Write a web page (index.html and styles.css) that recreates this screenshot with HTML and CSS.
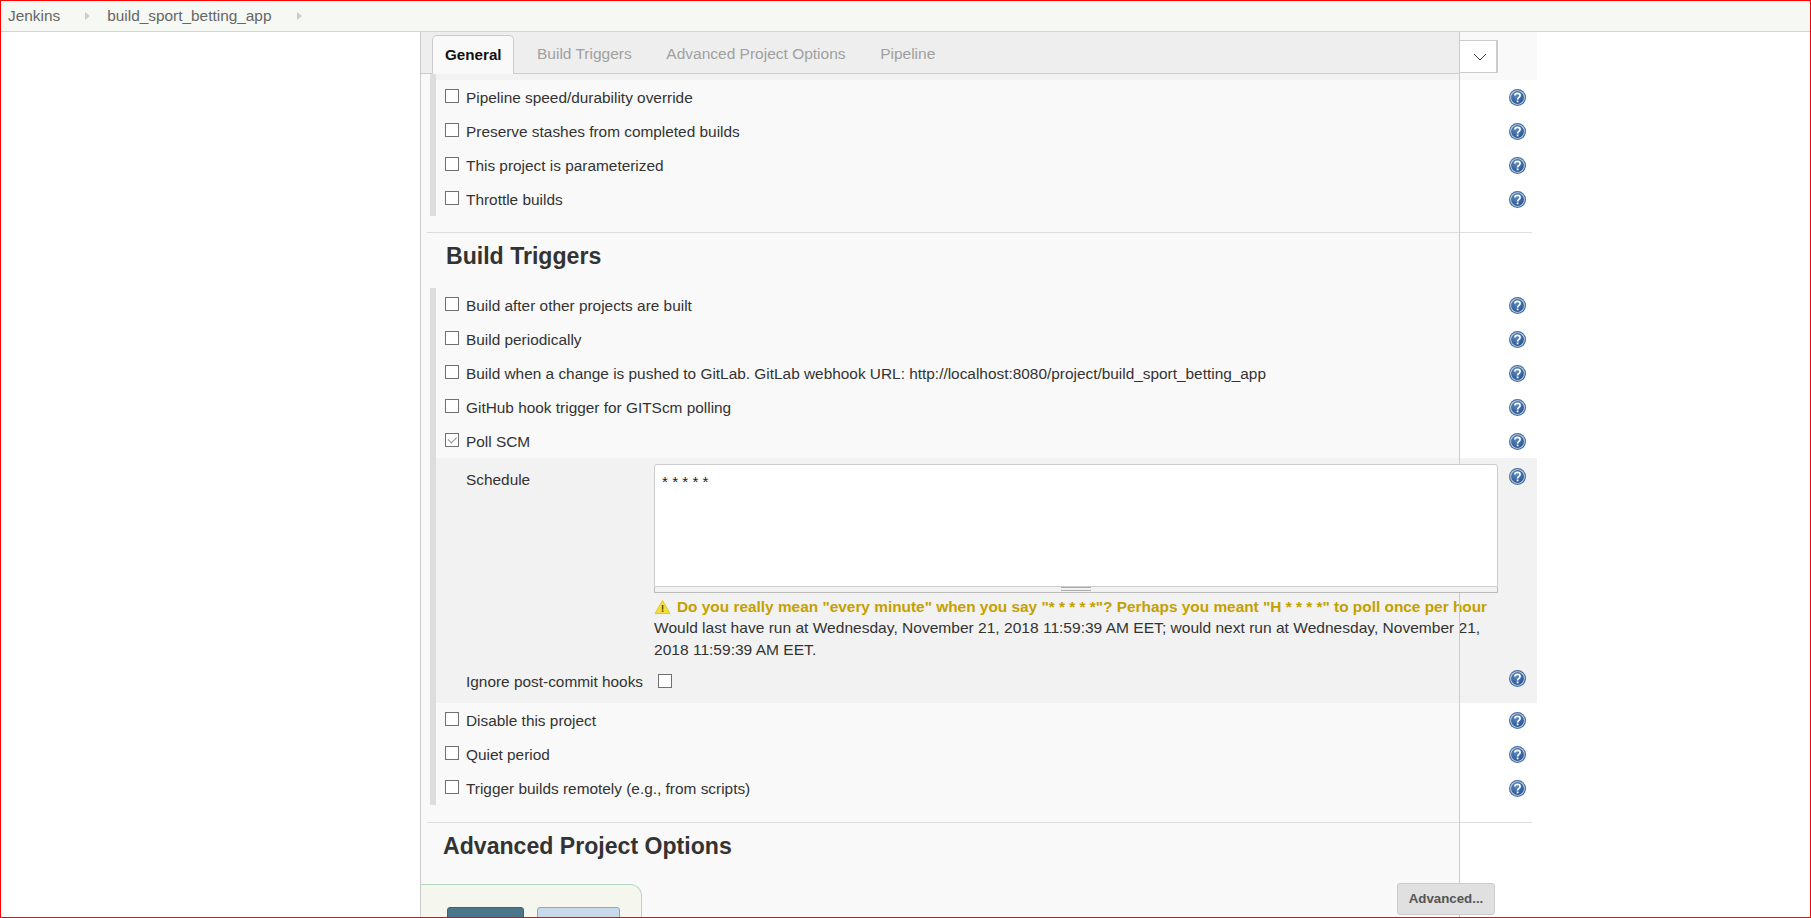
FILE: index.html
```html
<!doctype html>
<html>
    <head>
        <title>build_sport_betting_app Config [Jenkins]</title>
        <link rel="stylesheet" href="styles.css">
    </head>
    <body>
        <svg class="defs" width="0" height="0">
            <defs>
                <radialGradient id="help_fill" cx="40%" cy="30%" r="80%">
                    <stop offset="0" stop-color="#5f8bc2" />
                    <stop offset="1" stop-color="#224f8e" />
                </radialGradient>
                <symbol id="help" viewBox="0 0 17 17">
                    <circle cx="8.5" cy="8.5" r="8.5" fill="#46709f" />
                    <circle cx="8.5" cy="8.5" r="7.3" fill="#c8d6e8" />
                    <circle cx="8.5" cy="8.5" r="6.4" fill="url(#help_fill)" />
                    <path d="M5.9 6.6 C5.9 3.6 11.1 3.6 11.1 6.6 C11.1 8.5 8.6 8.2 8.6 10.4" fill="none" stroke="#fff" stroke-width="1.7" />
                    <rect x="7.7" y="11.5" width="1.8" height="1.8" fill="#fff" />
                </symbol>
            </defs>
        </svg>
        <div class="page">
            <div class="breadcrumbs">
                <span class="crumb">Jenkins</span>
                <span class="crumb_arrow"></span>
                <span class="crumb">build_sport_betting_app</span>
                <span class="crumb_arrow"></span>
            </div>
            <div class="config">
                <div class="divider"></div>
                <div class="tabbar">
                    <div class="tabs">
                        <div class="tab active">General</div>
                        <div class="tab">Build Triggers</div>
                        <div class="tab">Advanced Project Options</div>
                        <div class="tab">Pipeline</div>
                    </div>
                    <div class="tab_menu">
                        <svg width="14" height="8" viewBox="0 0 14 8"><path d="M1 1 L7 7 L13 1" fill="none" stroke="#444" stroke-width="1" /></svg>
                    </div>
                </div>

                <div class="section">
                    <div class="band"></div>
                    <div class="row"><input type="checkbox" /><label>Pipeline speed/durability override</label><svg class="help"><use href="#help" /></svg></div>
                    <div class="row"><input type="checkbox" /><label>Preserve stashes from completed builds</label><svg class="help"><use href="#help" /></svg></div>
                    <div class="row"><input type="checkbox" /><label>This project is parameterized</label><svg class="help"><use href="#help" /></svg></div>
                    <div class="row"><input type="checkbox" /><label>Throttle builds</label><svg class="help"><use href="#help" /></svg></div>
                </div>

                <div class="section_header triggers"><h2>Build Triggers</h2></div>

                <div class="section">
                    <div class="row"><input type="checkbox" /><label>Build after other projects are built</label><svg class="help"><use href="#help" /></svg></div>
                    <div class="row"><input type="checkbox" /><label>Build periodically</label><svg class="help"><use href="#help" /></svg></div>
                    <div class="row"><input type="checkbox" /><label>Build when a change is pushed to GitLab. GitLab webhook URL: http://localhost:8080/project/build_sport_betting_app</label><svg class="help"><use href="#help" /></svg></div>
                    <div class="row"><input type="checkbox" /><label>GitHub hook trigger for GITScm polling</label><svg class="help"><use href="#help" /></svg></div>
                    <div class="row"><input type="checkbox" checked /><label>Poll SCM</label><svg class="help"><use href="#help" /></svg></div>
                    <div class="nested">
                        <div class="field_label">Schedule</div>
                        <div class="field_value">
                            <div class="textarea">* * * * *</div>
                            <div class="grip"><span></span></div>
                            <div class="warning">
                                <svg width="17" height="16" viewBox="0 0 17 16"><path d="M8.5 1.5 L16 14.5 L1 14.5 Z" fill="#f3de3c" stroke="#e2c62a" stroke-linejoin="round" /><rect x="7.8" y="6" width="1.6" height="4.5" fill="#5a5010" /><rect x="7.8" y="11.3" width="1.6" height="1.6" fill="#5a5010" /></svg>
                                <span>Do you really mean "every minute" when you say "* * * * *"? Perhaps you meant "H * * * *" to poll once per hour</span>
                            </div>
                            <div class="next_run">Would last have run at Wednesday, November 21, 2018 11:59:39 AM EET; would next run at Wednesday, November 21, 2018 11:59:39 AM EET.</div>
                        </div>
                        <svg class="help"><use href="#help" /></svg>
                        <div class="field_label hooks">Ignore post-commit hooks</div>
                        <div class="field_value hooks"><input type="checkbox" /></div>
                        <svg class="help hooks"><use href="#help" /></svg>
                    </div>
                    <div class="row"><input type="checkbox" /><label>Disable this project</label><svg class="help"><use href="#help" /></svg></div>
                    <div class="row"><input type="checkbox" /><label>Quiet period</label><svg class="help"><use href="#help" /></svg></div>
                    <div class="row"><input type="checkbox" /><label>Trigger builds remotely (e.g., from scripts)</label><svg class="help"><use href="#help" /></svg></div>
                </div>

                <div class="section_header advanced"><h2>Advanced Project Options</h2></div>

                <div class="footer">
                    <div class="bottom_bar">
                        <button class="save"></button>
                        <button class="apply"></button>
                    </div>
                    <button class="advanced_btn">Advanced...</button>
                </div>
            </div>
        </div>
    </body>
</html>
```

FILE: styles.css
```css
html, body {
    margin: 0;
    height: 918px;
    overflow: hidden;
    background-color: #fff;
}

body {
    font-family: "Liberation Sans", Arial, sans-serif;
    font-size: 15.4px;
    color: #333;
}

.defs {
    display: block;
    height: 0;
}

.page {
    height: 918px;
    box-sizing: border-box;
    border: 1px solid #f00;
    overflow: hidden;
}

.breadcrumbs {
    height: 30px;
    background-color: #f6f8f3;
    border-bottom: 1px solid #d3d3d3;
    display: flex;
    align-items: center;
    padding-left: 7px;
    color: #666;
}

.crumb_arrow {
    width: 0;
    height: 0;
    border-left: 5px solid #ccc;
    border-top: 4px solid transparent;
    border-bottom: 4px solid transparent;
    margin: -1px 17px 0 25px;
}

.config {
    position: relative;
    margin-left: 419px;
    width: 1116px;
    height: 886px;
    border-left: 1px solid #ccc;
    background: linear-gradient(90deg, #f9f9f9 1038px, #fff 1038px);
}

.divider {
    position: absolute;
    left: 1038px;
    top: 0;
    bottom: 0;
    width: 1px;
    background-color: #ccc;
}

.tabbar {
    height: 42px;
    display: flex;
    background-color: #f9f9f9;
}

.tabs {
    width: 1038px;
    height: 42px;
    box-sizing: border-box;
    background-color: #eee;
    border-bottom: 1px solid #ccc;
    display: flex;
    align-items: flex-end;
    padding-left: 11px;
}

.tab {
    height: 38px;
    line-height: 38px;
    padding: 0 17.3px;
    font-size: 15.5px;
    color: #a0a0a0;
}

.tab.active {
    box-sizing: border-box;
    width: 82px;
    height: 39px;
    margin-bottom: -1px;
    padding: 0 0 0 12px;
    margin-right: 5.7px;
    font-size: 15.2px;
    font-weight: bold;
    color: #111;
    background-color: #f9f9f9;
    border: 1px solid #ccc;
    border-bottom: none;
    border-radius: 5px 5px 0 0;
}

.tab_menu {
    width: 38px;
    height: 33px;
    margin: 8px 0 0 1px;
    box-sizing: border-box;
    background-color: #fff;
    border: 1px solid #ccc;
    border-width: 1px 2px 1px 0;
    padding-left: 3px;
    display: flex;
    align-items: center;
    justify-content: center;
}

.section {
    margin-left: 9px;
    width: 1107px;
    box-sizing: border-box;
    border-left: 6px solid #ddd;
}

.band {
    height: 6px;
    background: linear-gradient(90deg, #f2f2f2 1023px, #f9f9f9 1023px);
}

.row {
    height: 34px;
    display: flex;
    align-items: center;
    padding: 0 11px 0 9px;
}

.row label {
    padding-top: 2px;
}

input[type="checkbox"] {
    appearance: none;
    box-sizing: border-box;
    width: 14px;
    height: 14px;
    margin: -2px 7px 0 0;
    flex-shrink: 0;
    border: 1px solid #707070;
    background-color: #fff;
    position: relative;
}

input[type="checkbox"]:checked::after {
    content: "";
    position: absolute;
    left: 4px;
    top: 1px;
    width: 4px;
    height: 7px;
    border: solid #888;
    border-width: 0 1px 1px 0;
    transform: rotate(45deg);
}

.help {
    width: 17px;
    height: 17px;
    margin-left: auto;
    flex-shrink: 0;
}

.section_header {
    margin-left: 6px;
    border-top: 1px solid #ddd;
}

.section_header h2 {
    margin: 0;
    font-size: 23.1px;
    font-weight: bold;
    line-height: 26px;
    padding-top: 10px;
}

.section_header.triggers {
    margin-top: 16px;
    height: 55px;
    padding-left: 19px;
    width: 1086px;
}

.section_header.advanced {
    margin-top: 17px;
    height: 61px;
    padding-left: 16px;
    width: 1089px;
}

.nested {
    height: 245px;
    box-sizing: border-box;
    background-color: #f2f2f2;
    padding: 6px 11px 0 30px;
    display: grid;
    grid-template-columns: 188px 844px 28px;
    grid-template-rows: 196px 1fr;
}

.nested .help {
    justify-self: end;
    margin: 4px 0 0 0;
}

.nested .help.hooks {
    margin-top: 10px;
}

.field_label {
    padding-top: 6px;
    line-height: 20px;
}

.field_label.hooks,
.field_value.hooks {
    padding-top: 12px;
}

.field_value {
    min-width: 0;
}

.field_value.hooks input {
    display: block;
    margin: 2px 0 0 4px;
}

.textarea {
    position: relative;
    z-index: 1;
    box-sizing: border-box;
    height: 123px;
    background-color: #fff;
    border: 1px solid #ccc;
    border-radius: 3px 3px 0 0;
    padding: 7px 7px 5px;
    line-height: 19px;
    font-size: 15.2px;
    color: #222;
    width: 844px;
}

.grip {
    position: relative;
    z-index: 1;
    box-sizing: border-box;
    height: 6px;
    background-color: #f2f2f2;
    border: 1px solid #bbb;
    border-top: none;
    width: 844px;
    display: flex;
    justify-content: center;
}

.grip span {
    width: 30px;
    height: 2px;
    border: solid #aaa;
    border-width: 1px 0;
}

.warning {
    height: 21px;
    margin-top: 3px;
    display: flex;
    align-items: center;
    font-weight: bold;
    color: #c4a000;
    white-space: nowrap;
}

.warning svg {
    margin-right: 6px;
    flex-shrink: 0;
}

.next_run {
    line-height: 21.5px;
    font-size: 15.55px;
    width: 835px;
}

.footer {
    display: flex;
    align-items: flex-start;
}

.bottom_bar {
    position: relative;
    z-index: 1;
    width: 221px;
    height: 60px;
    box-sizing: border-box;
    background-color: #f5f7ef;
    border: 1px solid #b5d6bf;
    border-width: 1px 1px 0 0;
    border-radius: 0 12px 0 0;
    padding: 22px 0 0 26px;
    display: flex;
    gap: 13px;
}

.bottom_bar button {
    height: 40px;
    padding: 0;
    box-sizing: border-box;
    border-radius: 3px;
}

.save {
    width: 77px;
    background-color: #4b758b;
    border: 1px solid #3e6275;
}

.apply {
    width: 83px;
    background-color: #c8d9eb;
    border: 1px solid #80a9d6;
}

.advanced_btn {
    position: relative;
    z-index: 1;
    margin: -1px 42px 0 auto;
    width: 98px;
    height: 32px;
    box-sizing: border-box;
    font-family: "Liberation Sans", Arial, sans-serif;
    font-size: 13.3px;
    font-weight: bold;
    color: #555;
    background-color: #e0e0e0;
    border: 1px solid #ccc;
    border-radius: 3px;
    padding: 0 0 2px 0;
}
```
